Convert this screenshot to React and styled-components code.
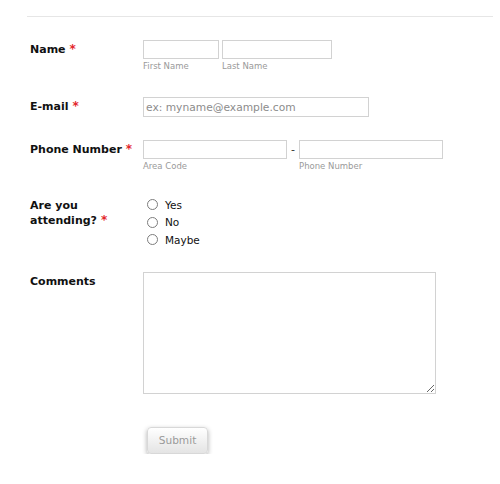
import React from 'react';
import styled, { createGlobalStyle } from 'styled-components';

const GlobalStyle = createGlobalStyle`
  html, body {
    margin: 0;
    padding: 0;
    background: #ffffff;
  }
  body {
    font-family: 'DejaVu Sans', Verdana, sans-serif;
    color: #111;
  }
`;

const Page = styled.div`
  padding: 16px 7px 0 27px;
`;

const Divider = styled.div`
  border-top: 1px solid #e6e6e6;
`;

const Form = styled.form`
  padding-left: 3px;
`;

const Row = styled.div`
  display: grid;
  grid-template-columns: 113px 1fr;
  margin-top: ${(p) => p.top}px;
`;

const Label = styled.div`
  font-size: 11px;
  font-weight: bold;
  line-height: ${(p) => (p.multi ? '14px' : '19px')};
  padding-top: ${(p) => (p.multi ? '3px' : '0')};
  color: #111;
`;

const Star = styled.span`
  color: #e3262b;
  font-size: 12px;
  margin-left: 4px;
`;

const Fields = styled.div`
  display: flex;
  align-items: flex-start;
  gap: ${(p) => p.gap || 0}px;
`;

const Field = styled.div`
  display: flex;
  flex-direction: column;
`;

const Input = styled.input`
  box-sizing: border-box;
  width: ${(p) => p.w}px;
  height: ${(p) => p.h || 19}px;
  border: 1px solid #d2d2d2;
  padding: 0 2px;
  font-family: 'DejaVu Sans', Verdana, sans-serif;
  font-size: 10.7px;
  color: #333;
  outline: none;
  &::placeholder {
    color: #8c8c8c;
  }
`;

const SubLabel = styled.span`
  margin-top: 2px;
  font-size: 8.5px;
  line-height: 11px;
  color: #9a9a9a;
`;

const Dash = styled.span`
  width: 12px;
  text-align: center;
  font-size: 11px;
  line-height: 19px;
  color: #333;
`;

const RadioList = styled.div`
  display: flex;
  flex-direction: column;
`;

const RadioItem = styled.label`
  display: flex;
  align-items: center;
  height: 17.5px;
  padding-left: 4px;
  font-size: 10.5px;
  color: #111;
`;

const RadioCircle = styled.span`
  box-sizing: border-box;
  width: 11px;
  height: 11px;
  border: 1px solid #7d7d7d;
  border-radius: 50%;
  margin-right: 7px;
`;

const TextArea = styled.textarea`
  box-sizing: border-box;
  width: 293px;
  height: 122px;
  border: 1px solid #d2d2d2;
  resize: both;
  outline: none;
  margin: 0;
  display: block;
`;

const SubmitButton = styled.button`
  margin-left: 4px;
  width: 61px;
  height: 27px;
  border: 1px solid #d8d8d8;
  border-radius: 4px;
  background: linear-gradient(#ffffff, #e4e4e4);
  box-shadow: 0 2px 5px rgba(0, 0, 0, 0.32);
  font-family: 'DejaVu Sans', Verdana, sans-serif;
  font-size: 10.6px;
  color: #9a9a9a;
  padding: 0;
`;

const App = () => {
  return (
    <Page>
      <GlobalStyle />
      <Divider />
      <Form onSubmit={(e) => e.preventDefault()}>
        <Row top={23}>
          <Label>
            Name<Star>*</Star>
          </Label>
          <Fields gap={3}>
            <Field>
              <Input w={76} />
              <SubLabel>First Name</SubLabel>
            </Field>
            <Field>
              <Input w={110} />
              <SubLabel>Last Name</SubLabel>
            </Field>
          </Fields>
        </Row>

        <Row top={25}>
          <Label>
            E-mail<Star>*</Star>
          </Label>
          <Fields>
            <Input w={226} h={20} placeholder="ex: myname@example.com" />
          </Fields>
        </Row>

        <Row top={23}>
          <Label>
            Phone Number<Star>*</Star>
          </Label>
          <Fields>
            <Field>
              <Input w={144} />
              <SubLabel>Area Code</SubLabel>
            </Field>
            <Dash>-</Dash>
            <Field>
              <Input w={144} />
              <SubLabel>Phone Number</SubLabel>
            </Field>
          </Fields>
        </Row>

        <Row top={24}>
          <Label multi>
            Are you
            <br />
            attending?<Star>*</Star>
          </Label>
          <RadioList>
            {['Yes', 'No', 'Maybe'].map((opt) => (
              <RadioItem key={opt}>
                <RadioCircle />
                {opt}
              </RadioItem>
            ))}
          </RadioList>
        </Row>

        <Row top={23}>
          <Label multi>Comments</Label>
          <div>
            <TextArea />
          </div>
        </Row>

        <Row top={33}>
          <div />
          <div>
            <SubmitButton type="submit">Submit</SubmitButton>
          </div>
        </Row>
      </Form>
    </Page>
  );
};

export default App;
